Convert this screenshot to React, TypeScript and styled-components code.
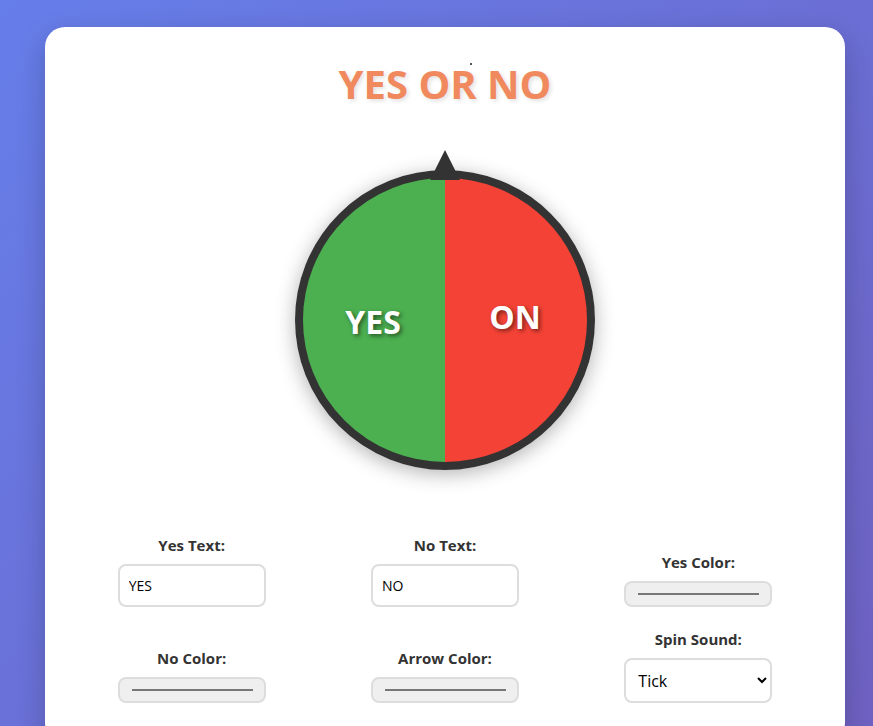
import React, { useState } from "react";
import styled, { createGlobalStyle } from "styled-components";

const GlobalStyle = createGlobalStyle`
  html, body {
    margin: 0;
    padding: 0;
  }
  body {
    font-family: "Open Sans", "Noto Sans", "Liberation Sans", sans-serif;
    color: #333;
  }
  * { box-sizing: border-box; }
`;

const Page = styled.div`
  min-height: 100vh;
  padding: 27px 28px 40px 45px;
  background: linear-gradient(135deg, #667eea 0%, #764ba2 100%);
  background-size: 100% 2000px;
`;

const Card = styled.div`
  position: relative;
  width: 800px;
  background: #fff;
  border-radius: 20px;
  padding: 33px 40px 40px;
  box-shadow: 0 10px 30px rgba(0, 0, 0, 0.2);
`;

const Dot = styled.span`
  position: absolute;
  left: 425px;
  top: 36px;
  width: 2px;
  height: 2px;
  border-radius: 50%;
  background: #222;
`;

const Title = styled.h1`
  margin: 0;
  text-align: center;
  font-size: 40px;
  line-height: 48px;
  font-weight: 700;
  color: #f0895e;
  text-shadow: 2px 2px 4px rgba(0, 0, 0, 0.12);
`;

const WheelArea = styled.div`
  position: relative;
  width: 300px;
  margin: 42px auto 0;
  padding-top: 20px;
`;

const Pointer = styled.div<{ $color: string }>`
  position: absolute;
  top: 0;
  left: 50%;
  transform: translateX(-50%);
  width: 0;
  height: 0;
  border-left: 15px solid transparent;
  border-right: 15px solid transparent;
  border-bottom: 30px solid ${(p) => p.$color};
  z-index: 2;
`;

const Wheel = styled.div<{ $yes: string; $no: string }>`
  position: relative;
  width: 300px;
  height: 300px;
  border-radius: 50%;
  border: 8px solid #333;
  background: linear-gradient(
    90deg,
    ${(p) => p.$yes} 0%,
    ${(p) => p.$yes} 50%,
    ${(p) => p.$no} 50%,
    ${(p) => p.$no} 100%
  );
  box-shadow: 0 4px 20px rgba(0, 0, 0, 0.3);
`;

const SegmentLabel = styled.span<{ $x: number; $y: number }>`
  position: absolute;
  left: ${(p) => 142 + p.$x}px;
  top: ${(p) => 142 + p.$y}px;
  transform: translate(-50%, -50%);
  font-size: 32px;
  line-height: 40px;
  font-weight: 700;
  color: #fff;
  text-shadow: 2px 2px 4px rgba(0, 0, 0, 0.5);
  white-space: nowrap;
`;

const Controls = styled.div`
  display: grid;
  grid-template-columns: repeat(3, 1fr);
  column-gap: 40px;
  row-gap: 23px;
  margin-top: 66px;
  align-items: end;
`;

const Field = styled.div`
  display: flex;
  flex-direction: column;
  align-items: center;
`;

const Label = styled.label`
  font-size: 15px;
  line-height: 18px;
  font-weight: 700;
  color: #333;
  margin-bottom: 10px;
`;

const TextInput = styled.input`
  width: 148px;
  height: 43px;
  padding: 10px 10px 10px 9px;
  border: 2px solid #ddd;
  border-radius: 8px;
  font-family: "Open Sans", "Noto Sans", sans-serif;
  font-size: 14px;
  color: #000;
  background: #fff;
  outline: none;
`;

const ColorInput = styled.input`
  width: 148px;
  height: 26px;
  padding: 0;
  border: 2px solid #ddd;
  border-radius: 8px;
  background: #efefef;
  cursor: pointer;
  &::-webkit-color-swatch-wrapper {
    padding: 10px 11px 10px 12px;
  }
  &::-webkit-color-swatch {
    border: 1px solid #777;
    border-radius: 0;
  }
`;

const Select = styled.select`
  width: 148px;
  height: 45px;
  padding: 0 6px 0 8px;
  border: 2px solid #ddd;
  border-radius: 8px;
  font-family: "Open Sans", "Noto Sans", sans-serif;
  font-size: 16px;
  color: #000;
  background: #fff;
  outline: none;
`;

export default function App() {
  const [yesText, setYesText] = useState("YES");
  const [noText, setNoText] = useState("NO");
  const [yesColor, setYesColor] = useState("#4caf50");
  const [noColor, setNoColor] = useState("#f44336");
  const [arrowColor, setArrowColor] = useState("#333333");
  const [sound, setSound] = useState("tick");

  return (
    <>
      <GlobalStyle />
      <Page>
        <Card>
          <Dot />
          <Title>YES OR NO</Title>
          <WheelArea>
            <Pointer $color={arrowColor} />
            <Wheel $yes={yesColor} $no={noColor}>
              <SegmentLabel $x={-72} $y={2}>
                {yesText}
              </SegmentLabel>
              <SegmentLabel $x={70} $y={-3}>
                {noText.split("").reverse().join("")}
              </SegmentLabel>
            </Wheel>
          </WheelArea>
          <Controls>
            <Field>
              <Label>Yes Text:</Label>
              <TextInput value={yesText} onChange={(e) => setYesText(e.target.value)} />
            </Field>
            <Field>
              <Label>No Text:</Label>
              <TextInput value={noText} onChange={(e) => setNoText(e.target.value)} />
            </Field>
            <Field>
              <Label>Yes Color:</Label>
              <ColorInput type="color" value={yesColor} onChange={(e) => setYesColor(e.target.value)} />
            </Field>
            <Field>
              <Label>No Color:</Label>
              <ColorInput type="color" value={noColor} onChange={(e) => setNoColor(e.target.value)} />
            </Field>
            <Field>
              <Label>Arrow Color:</Label>
              <ColorInput type="color" value={arrowColor} onChange={(e) => setArrowColor(e.target.value)} />
            </Field>
            <Field>
              <Label>Spin Sound:</Label>
              <Select value={sound} onChange={(e) => setSound(e.target.value)}>
                <option value="tick">Tick</option>
                <option value="none">None</option>
              </Select>
            </Field>
          </Controls>
        </Card>
      </Page>
    </>
  );
}
